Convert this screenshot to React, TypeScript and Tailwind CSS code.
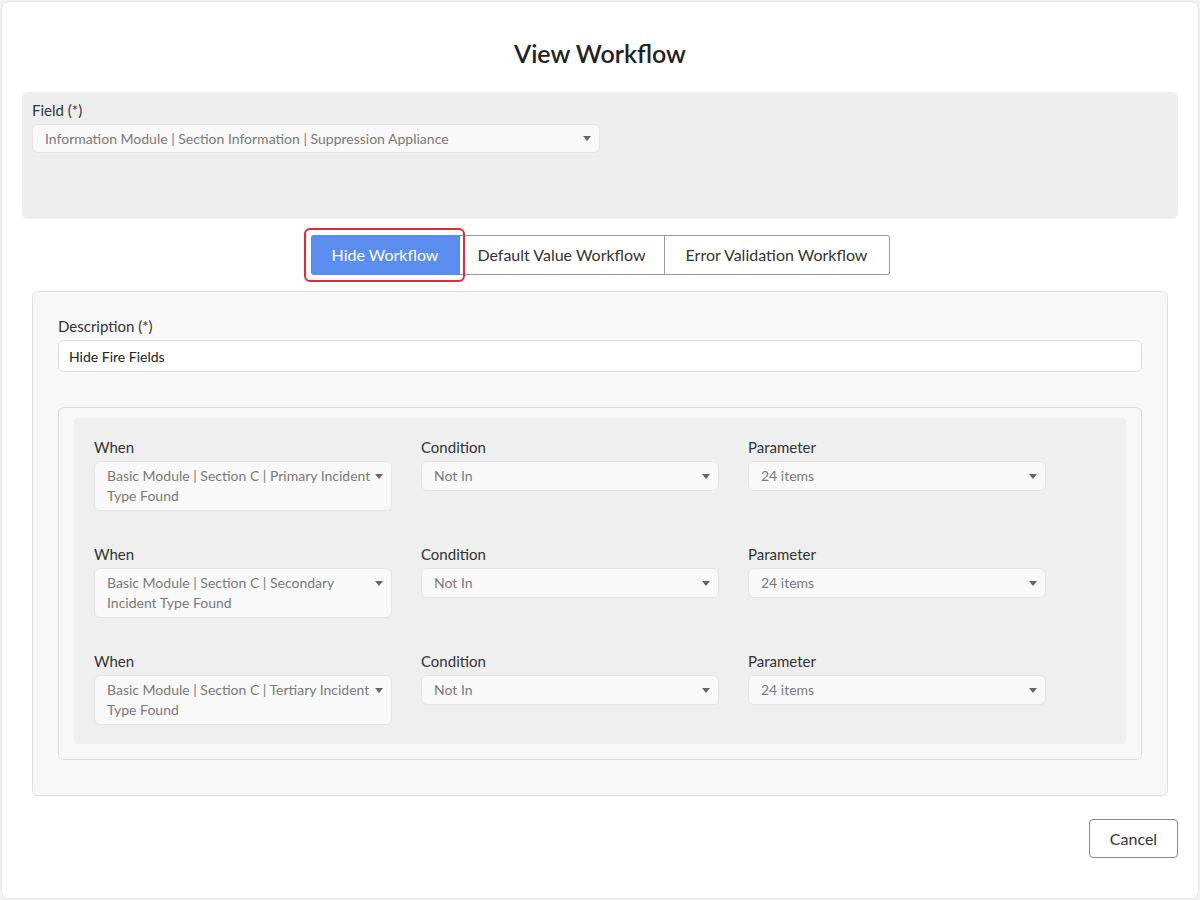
import React from "react";

const Caret = () => (
  <svg width="8" height="5" viewBox="0 0 8 5" className="shrink-0">
    <path d="M0 0 L8 0 L4 5 Z" fill="#666" />
  </svg>
);

const Select = ({ text, className = "" }: { text: string; className?: string }) => (
  <div
    className={`flex items-start justify-between rounded-[6px] border border-[#e4e4e4] bg-[#f9f9f9] pl-[12px] pr-[8px] py-[4px] text-[14px] leading-[20px] text-[#7a7a7a] ${className}`}
  >
    <span className="pr-[3px]">{text}</span>
    <span className="mt-[8px]">
      <Caret />
    </span>
  </div>
);

const rows = [
  "Basic Module | Section C | Primary Incident Type Found",
  "Basic Module | Section C | Secondary Incident Type Found",
  "Basic Module | Section C | Tertiary Incident Type Found",
];

export default function App() {
  return (
    <div
      className="w-[1200px] h-[900px] bg-[#f1f1f5] p-[1px]"
      style={{ fontFamily: "Lato, 'Open Sans', sans-serif" }}
    >
      <div className="h-[898px] rounded-[8px] border border-[#e6e6ec] bg-white px-[20px] pt-[34px]">
        <h1 className="text-center text-[25px] leading-[34px] font-semibold text-[#222]">View Workflow</h1>

        <div className="mt-[22px] h-[127px] rounded-[6px] bg-[#eeeeee] px-[10px] pt-[9px]">
          <div className="text-[15px] leading-[18px] text-[#333]">Field (*)</div>
          <div className="mt-[5px] w-[568px] flex items-center justify-between rounded-[6px] border border-[#e4e4e4] bg-[#f9f9f9] pl-[12px] pr-[8px] h-[29px] text-[14px] text-[#7a7a7a]">
            <span>Information Module | Section Information | Suppression Appliance</span>
            <Caret />
          </div>
        </div>

        <div className="mt-[16px] flex justify-center">
          <div className="flex h-[40px] text-[16px] text-[#333]">
            <div className="relative">
              <div className="absolute -left-[7px] -top-[7px] -right-[5px] -bottom-[7px] rounded-[6px] border-2 border-[#e3283a]" />
              <button className="h-[40px] w-[149px] rounded-l-[3px] bg-[#5b8def] text-white">Hide Workflow</button>
            </div>
            <button className="h-[40px] w-[205px] border-y border-r border-[#9a9a9a] bg-white">Default Value Workflow</button>
            <button className="h-[40px] w-[225px] rounded-r-[3px] border-y border-r border-[#9a9a9a] bg-white">Error Validation Workflow</button>
          </div>
        </div>

        <div className="mx-[10px] mt-[16px] rounded-[6px] border border-[#dedede] bg-[#f8f8f8] px-[25px] pt-[25px] pb-[35px]">
          <div className="text-[15px] leading-[18px] text-[#333]">Description (*)</div>
          <div className="mt-[5px] flex h-[32px] items-center rounded-[6px] border border-[#dedede] bg-white px-[10px] text-[14px] text-[#222]">
            Hide Fire Fields
          </div>

          <div className="mt-[35px] rounded-[6px] border border-[#dedede] bg-[#f8f8f8] px-[15px] pt-[10px] pb-[15px]">
            <div className="rounded-[4px] bg-[#efefef] px-[20px] pt-[20px] pb-[19px] flex flex-col gap-[34px]">
              {rows.map((r, i) => (
                <div key={i} className="grid grid-cols-[298px_298px_298px] gap-x-[29px] items-start">
                  <div>
                    <div className="text-[15px] leading-[18px] text-[#333]">When</div>
                    <Select text={r} className="mt-[5px]" />
                  </div>
                  <div>
                    <div className="text-[15px] leading-[18px] text-[#333]">Condition</div>
                    <Select text="Not In" className="mt-[5px]" />
                  </div>
                  <div>
                    <div className="text-[15px] leading-[18px] text-[#333]">Parameter</div>
                    <Select text="24 items" className="mt-[5px]" />
                  </div>
                </div>
              ))}
            </div>
          </div>
        </div>

        <div className="mt-[23px] flex justify-end">
          <button className="h-[39px] w-[89px] rounded-[4px] border border-[#8a8a8a] bg-white text-[16px] text-[#333]">
            Cancel
          </button>
        </div>
      </div>
    </div>
  );
}
